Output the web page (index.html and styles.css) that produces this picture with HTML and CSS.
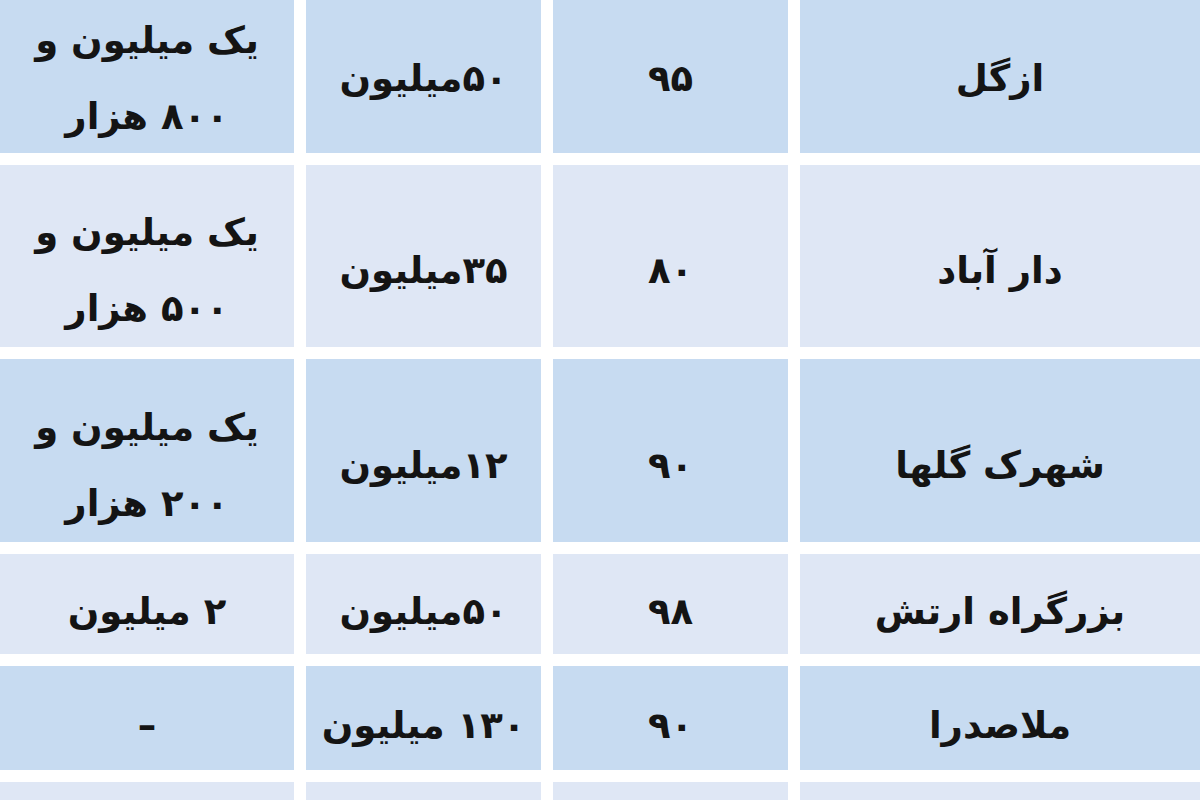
FILE: index.html
```html
<!DOCTYPE html>
<html lang="fa" dir="rtl">
<head>
<meta charset="utf-8">
<title>جدول اجاره</title>
<link rel="stylesheet" href="styles.css">
</head>
<body>
<div class="table">
  <div class="cell dark first">ازگل</div>
  <div class="cell dark first">۹۵</div>
  <div class="cell dark first">۵۰میلیون</div>
  <div class="cell dark first">یک میلیون و<br>۸۰۰ هزار</div>

  <div class="cell light tall">دار آباد</div>
  <div class="cell light tall">۸۰</div>
  <div class="cell light tall">۳۵میلیون</div>
  <div class="cell light tall">یک میلیون و<br>۵۰۰ هزار</div>

  <div class="cell dark tall">شهرک گلها</div>
  <div class="cell dark tall">۹۰</div>
  <div class="cell dark tall">۱۲میلیون</div>
  <div class="cell dark tall">یک میلیون و<br>۲۰۰ هزار</div>

  <div class="cell light">بزرگراه ارتش</div>
  <div class="cell light">۹۸</div>
  <div class="cell light">۵۰میلیون</div>
  <div class="cell light">۲ میلیون</div>

  <div class="cell dark">ملاصدرا</div>
  <div class="cell dark">۹۰</div>
  <div class="cell dark">۱۳۰ میلیون</div>
  <div class="cell dark">–</div>

  <div class="cell light"></div>
  <div class="cell light"></div>
  <div class="cell light"></div>
  <div class="cell light"></div>
</div>
</body>
</html>
```

FILE: styles.css
```css
html, body {
  margin: 0;
  padding: 0;
  background: #ffffff;
}

body {
  width: 1200px;
  height: 800px;
  overflow: hidden;
  font-family: "DejaVu Sans", sans-serif;
  color: #141414;
}

.table {
  display: grid;
  grid-template-columns: 400px 235px 235px 294px;
  grid-template-rows: 153px 182px 183px 100px 104px 18px;
  column-gap: 12px;
  row-gap: 12px;
}

.cell {
  display: flex;
  align-items: center;
  justify-content: center;
  text-align: center;
  font-size: 37px;
  font-weight: bold;
  line-height: 76px;
  padding-top: 16px;
  box-sizing: border-box;
  overflow: hidden;
}

.first {
  padding-top: 4px;
}

.tall {
  padding-top: 30px;
}

.dark {
  background: #c7dbf1;
}

.light {
  background: #dfe7f5;
}
```
